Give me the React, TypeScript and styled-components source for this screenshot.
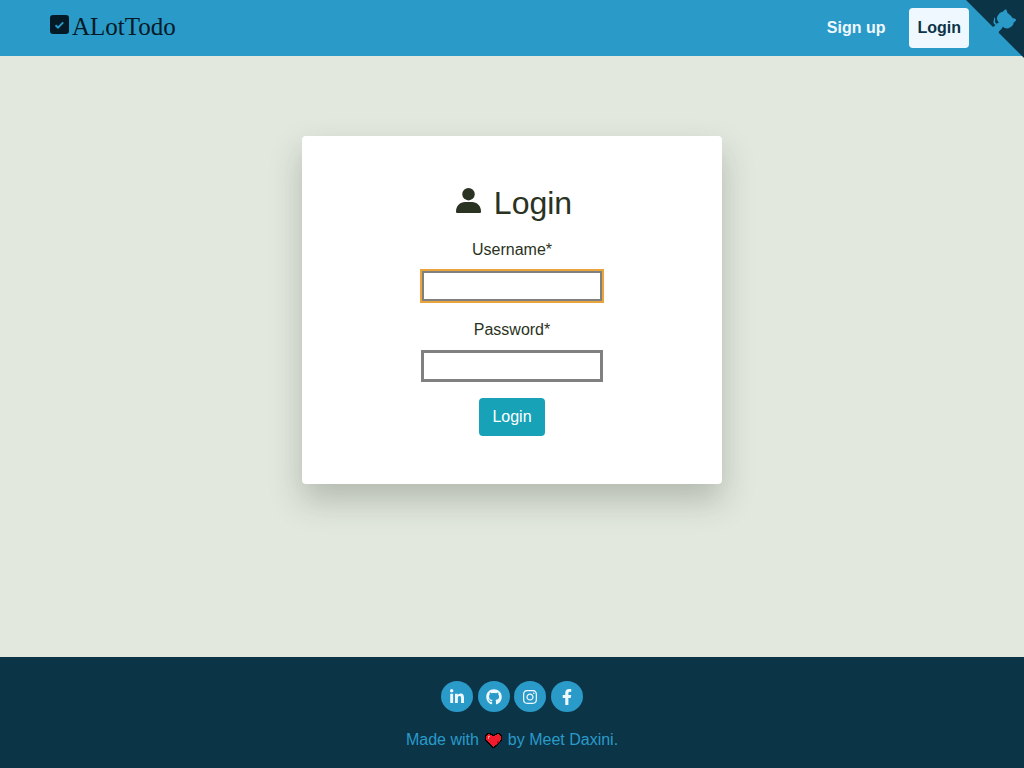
import styled, { createGlobalStyle } from 'styled-components';
import { FaLinkedinIn, FaGithub, FaInstagram, FaFacebookF } from 'react-icons/fa';

const Global = createGlobalStyle`
  html, body, #root {
    margin: 0;
    height: 100%;
  }
  body {
    font-family: "Liberation Sans", Arial, sans-serif;
    font-size: 16px;
    color: #2a3222;
    background: #e2e8de;
  }
`;

const Page = styled.div`
  position: relative;
  display: flex;
  flex-direction: column;
  height: 768px;
  overflow: hidden;
`;

const Header = styled.header`
  flex: none;
  height: 56px;
  display: flex;
  align-items: center;
  justify-content: space-between;
  padding: 0 55px 0 50px;
  background: #2a9ac9;
`;

const Brand = styled.a`
  display: flex;
  align-items: center;
  gap: 3px;
  margin-top: -2px;
  font-family: "Liberation Serif", "Times New Roman", serif;
  font-size: 25px;
  line-height: 30px;
  color: #041a26;
  svg {
    margin-top: -5px;
  }
`;

const Nav = styled.nav`
  display: flex;
  align-items: center;
  gap: 16px;
`;

const NavLink = styled.a<{ $active?: boolean }>`
  display: flex;
  align-items: center;
  height: 40px;
  padding: 0 8px;
  border-radius: 4px;
  font-weight: 700;
  color: ${(p) => (p.$active ? '#0b3447' : '#f0f8ff')};
  background: ${(p) => (p.$active ? '#f0f8ff' : 'transparent')};
`;

const Corner = styled.svg`
  position: absolute;
  top: 0;
  right: 0;
  width: 58px;
  height: 58px;
  fill: #0b3447;
  color: #2a9ac9;
`;

const Main = styled.main`
  flex: 1;
  display: flex;
  justify-content: center;
  padding-top: 80px;
`;

const Card = styled.form`
  width: 420px;
  height: 348px;
  box-sizing: border-box;
  padding-top: 48px;
  display: flex;
  flex-direction: column;
  align-items: center;
  background: #fff;
  border-radius: 4px;
  box-shadow: 0 16px 32px rgba(40, 48, 32, 0.25);
`;

const Title = styled.h2`
  display: flex;
  align-items: center;
  gap: 13px;
  margin: 0 0 16px;
  padding-left: 4px;
  font-size: 32px;
  font-weight: 400;
  line-height: 38px;
  svg {
    margin-top: -6px;
  }
`;

const Label = styled.label`
  line-height: 24px;
  margin-bottom: 8px;
`;

const Input = styled.input<{ $focused?: boolean }>`
  width: 182px;
  height: 32px;
  box-sizing: border-box;
  margin: 0 0 16px;
  padding: 0;
  background: #fff;
  border: 3px solid #808080;
  border-radius: 0;
  outline: ${(p) => (p.$focused ? '2px solid #e9a53c' : 'none')};
  outline-offset: -1px;
`;

const Submit = styled.button`
  width: 66px;
  height: 38px;
  border: none;
  border-radius: 4px;
  font: inherit;
  color: #fff;
  background: #17a2b8;
`;

const Footer = styled.footer`
  flex: none;
  height: 111px;
  box-sizing: border-box;
  padding-top: 24px;
  display: flex;
  flex-direction: column;
  align-items: center;
  gap: 16px;
  background: #0b3447;
  color: #2a9ac9;
`;

const Socials = styled.div`
  display: flex;
  gap: 4.67px;
`;

const Social = styled.a`
  width: 32px;
  height: 31px;
  border-radius: 50%;
  display: flex;
  align-items: center;
  justify-content: center;
  background: #2a9ac9;
  color: #f0f8ff;
  svg {
    width: 16px;
    height: 16px;
  }
`;

const Credit = styled.p`
  display: flex;
  align-items: center;
  gap: 6px;
  margin: 0;
  line-height: 24px;
`;

const CheckBox = () => (
  <svg width="19" height="19" viewBox="0 0 19 19">
    <rect width="19" height="19" rx="3" fill="#041a26" />
    <path d="M5.5 10.3 8 12.6l5.2-5.2" fill="none" stroke="#2a9ac9" strokeWidth="2" />
  </svg>
);

const UserIcon = () => (
  <svg width="25" height="25" viewBox="0 0 25 25" fill="currentColor">
    <circle cx="12.5" cy="6.2" r="6.2" />
    <path d="M0 23.5C0 18 4 14 9 14h7c5 0 9 4 9 9.5 0 1-.5 1.5-1.5 1.5h-22C.5 25 0 24.500 0 23.500z" />
  </svg>
);

const HEART_OUTLINE =
  'M8.500 3.500H7.500V2.500H5.500V1.500H2.500V2.500H1.500V3.500H.5V8.500H1.500V9.500H2.500V10.500H3.500V11.500H4.500V12.500H5.500V13.500H6.500V14.500H7.500V15.500H9.500V14.500H10.500V13.500H11.500V12.500H12.500V11.500H13.500V10.500H14.500V9.500H15.500V8.500H16.500V3.500H15.500V2.500H14.500V1.500H11.500V2.500H9.500V3.500Z';

const Heart = () => (
  <svg width="17" height="16" viewBox="0 0 17 16" shapeRendering="crispEdges">
    <path d={HEART_OUTLINE} fill="#f01c2c" stroke="#000" />
    <path d="M3 4h2v1H4v2H3z" fill="#ff9a9a" />
    <path d="M12 9h3v1h-1v1h-1v1h-1v1h-1v-1h1v-1h0z" fill="#b80d20" />
  </svg>
);

export default function App() {
  return (
    <Page>
      <Global />
      <Header>
        <Brand>
          <CheckBox />
          ALotTodo
        </Brand>
        <Nav>
          <NavLink>Sign up</NavLink>
          <NavLink $active>Login</NavLink>
        </Nav>
      </Header>
      <Corner viewBox="0 0 250 250">
        <path d="M0,0 L115,115 L130,115 L142,142 L250,250 L250,0 Z" />
        <path
          d="M128.3,109.0 C113.8,99.7 119.0,89.6 119.0,89.6 C122.0,82.7 120.5,78.6 120.5,78.6 C119.2,72.0 123.4,76.3 123.4,76.3 C127.3,80.9 125.5,87.3 125.5,87.3 C122.9,97.6 130.6,101.9 134.4,103.2"
          fill="currentColor"
        />
        <path
          d="M115.0,115.0 C114.9,115.1 118.7,116.5 119.8,115.4 L133.7,101.6 C136.9,99.2 139.9,98.4 142.2,98.6 C133.8,88.0 127.5,74.4 143.8,58.0 C148.5,53.4 154.0,51.2 159.7,51.0 C160.3,49.4 163.2,43.6 171.4,40.1 C171.4,40.1 176.1,42.5 178.8,56.2 C183.1,58.6 187.2,61.8 190.9,65.4 C194.5,69.0 197.7,73.2 200.1,77.6 C213.8,80.2 216.3,84.9 216.3,84.9 C212.7,93.1 206.9,96.0 205.4,96.6 C205.1,102.4 203.0,107.8 198.3,112.5 C181.9,128.9 168.3,122.5 157.7,114.1 C157.9,116.9 156.7,120.9 152.7,124.9 L141.0,136.5 C139.8,137.7 141.6,141.9 141.8,141.8 Z"
          fill="currentColor"
        />
      </Corner>
      <Main>
        <Card>
          <Title>
            <UserIcon />
            Login
          </Title>
          <Label>Username*</Label>
          <Input type="text" $focused />
          <Label>Password*</Label>
          <Input type="password" />
          <Submit type="button">Login</Submit>
        </Card>
      </Main>
      <Footer>
        <Socials>
          <Social><FaLinkedinIn /></Social>
          <Social><FaGithub /></Social>
          <Social><FaInstagram /></Social>
          <Social><FaFacebookF /></Social>
        </Socials>
        <Credit>
          Made with <Heart /> by Meet Daxini.
        </Credit>
      </Footer>
    </Page>
  );
}
